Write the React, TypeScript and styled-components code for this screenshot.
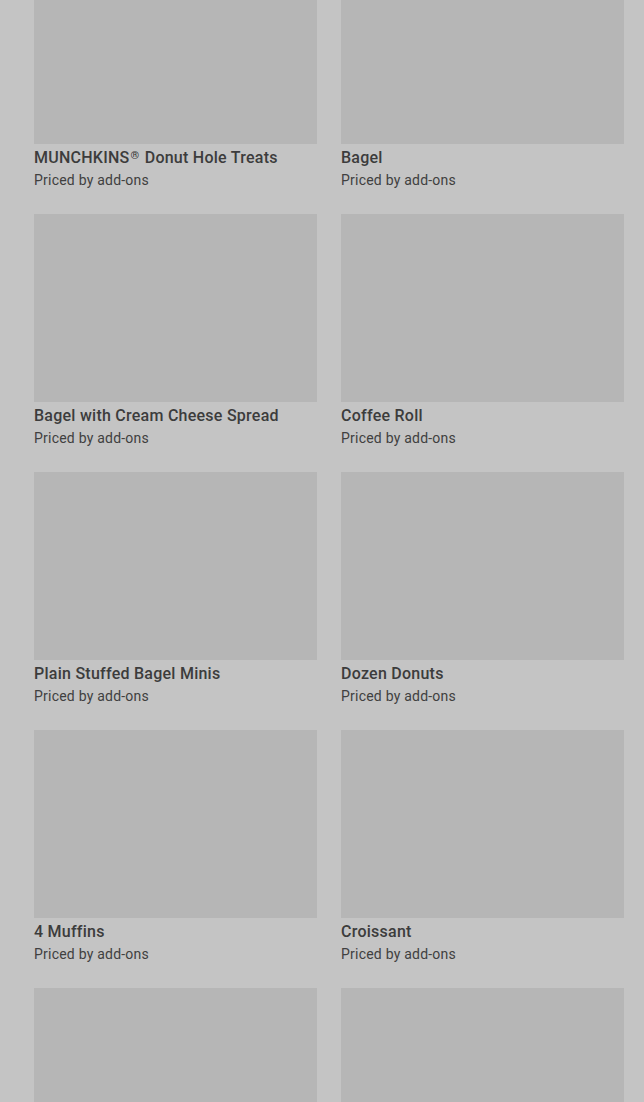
import React from "react";
import styled, { createGlobalStyle } from "styled-components";

const GlobalStyle = createGlobalStyle`
  html, body {
    margin: 0;
    padding: 0;
    background: #c4c4c4;
    overflow: hidden;
  }
  body {
    font-family: Roboto, "Liberation Sans", sans-serif;
  }
`;

const Page = styled.main`
  height: 1102px;
  overflow: hidden;
  background: #c4c4c4;
`;

const Grid = styled.div`
  display: grid;
  grid-template-columns: 283px 283px;
  column-gap: 24px;
  row-gap: 24px;
  padding: 0 20px 0 34px;
  margin-top: -44px;
`;

const Card = styled.article`
  display: flex;
  flex-direction: column;
`;

const Thumb = styled.div`
  height: 188px;
  background: #b6b6b6;
`;

const Title = styled.h3`
  margin: 4px 0 0;
  font-size: 16px;
  line-height: 20px;
  font-weight: 500;
  letter-spacing: 0.25px;
  color: #3c3c3c;
  white-space: nowrap;
`;

const Reg = styled.span`
  font-size: 11px;
  vertical-align: 4px;
  line-height: 0;
  margin: 0 1px 0 1px;
`;

const Sub = styled.p`
  margin: 2px 0 0;
  font-size: 14px;
  line-height: 20px;
  font-weight: 400;
  letter-spacing: 0.22px;
  color: #404040;
`;

const items = [
  "MUNCHKINS® Donut Hole Treats",
  "Bagel",
  "Bagel with Cream Cheese Spread",
  "Coffee Roll",
  "Plain Stuffed Bagel Minis",
  "Dozen Donuts",
  "4 Muffins",
  "Croissant",
  "",
  "",
];

function renderName(name: string) {
  const parts = name.split("®");
  if (parts.length === 1) return name;
  return (
    <>
      {parts[0]}
      <Reg>®</Reg>
      {parts[1]}
    </>
  );
}

export default function App() {
  return (
    <Page>
      <GlobalStyle />
      <Grid>
        {items.map((name, i) => (
          <Card key={i}>
            <Thumb />
            {name && <Title>{renderName(name)}</Title>}
            {name && <Sub>Priced by add-ons</Sub>}
          </Card>
        ))}
      </Grid>
    </Page>
  );
}
